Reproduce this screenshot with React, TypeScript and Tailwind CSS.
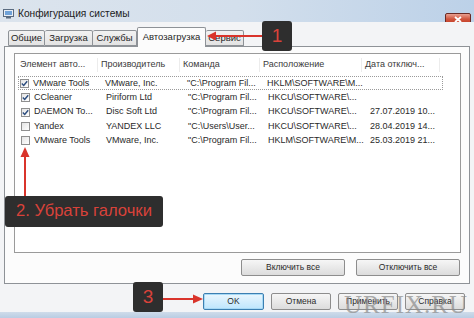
const font = { fontFamily: '"Liberation Sans", Arial, sans-serif' };

const rows = [
  { on: true, name: "VMware Tools", maker: "VMware, Inc.", cmd: "\"C:\\Program Fil...", loc: "HKLM\\SOFTWARE\\M...", date: "" },
  { on: true, name: "CCleaner", maker: "Piriform Ltd", cmd: "\"C:\\Program Fil...", loc: "HKCU\\SOFTWARE\\...", date: "" },
  { on: true, name: "DAEMON To...", maker: "Disc Soft Ltd", cmd: "\"C:\\Program Fil...", loc: "HKCU\\SOFTWARE\\...", date: "27.07.2019 10..." },
  { on: false, name: "Yandex", maker: "YANDEX LLC", cmd: "\"C:\\Users\\User...", loc: "HKCU\\SOFTWARE\\...", date: "28.04.2019 14..." },
  { on: false, name: "VMware Tools", maker: "VMware, Inc.", cmd: "\"C:\\Program Fil...", loc: "HKLM\\SOFTWARE\\M...", date: "25.03.2019 21..." },
];

const tabs = [
  { t: "Общие", w: "w-[37px]" },
  { t: "Загрузка", w: "w-[48px]" },
  { t: "Службы", w: "w-[44px]" },
  { t: "Автозагрузка", w: "w-[69px]" },
  { t: "Сервис", w: "w-[38px]" },
];

const Check = ({ on }: { on: boolean }) => (
  <span className="w-[9px] h-[9px] border border-[#8f8f8f] bg-gradient-to-br from-[#e4e4e4] to-[#ffffff] flex items-center justify-center shrink-0">
    {on && (
      <svg width="7" height="7" viewBox="0 0 7 7">
        <path d="M0.8 3.6 L2.7 5.5 L6.2 1.2" stroke="#2b4c7e" strokeWidth="1.4" fill="none" />
      </svg>
    )}
  </span>
);

const Btn = ({ label, w, focus }: { label: string; w: string; focus?: boolean }) => (
  <div
    className={`${w} h-[17px] rounded-[2px] border flex items-center justify-center text-[8.5px] text-[#2a2a2a] ${
      focus
        ? "border-[#3c7fb1] bg-gradient-to-b from-[#eaf6fd] to-[#bee6fd] shadow-[inset_0_0_0_1px_#a7d9f5]"
        : "border-[#8d8d8d] bg-gradient-to-b from-[#f6f6f6] to-[#dcdcdc]"
    }`}
  >
    {label}
  </div>
);

const App = () => {
  return (
    <div className="relative w-[474px] h-[318px] overflow-hidden flex flex-col bg-[#f2f3f5]" style={font}>
      {/* Title bar */}
      <div className="h-[22px] shrink-0 flex items-start bg-gradient-to-r from-[#dce4ed] via-[#d3dfec] to-[#bcd1e8]">
        <div className="flex items-center gap-[4px] pl-[3px] pt-[6px]">
          <svg width="11" height="10" viewBox="0 0 11 10">
            <rect x="0.5" y="0.5" width="10" height="7" fill="#e9eef5" stroke="#5a6b80" />
            <rect x="2" y="2" width="7" height="4" fill="#6fa2d8" />
            <rect x="3" y="8" width="5" height="1.5" fill="#5a6b80" />
          </svg>
          <span className="text-[10.2px] text-[#1b1b1b]">Конфигурация системы</span>
        </div>
        <div className="ml-auto mr-[3px] mt-[13px] w-[26px] h-[12px] rounded-[2px] border border-[#6b2a24] bg-gradient-to-b from-[#e8a091] via-[#d0553e] to-[#c23a22] flex items-center justify-center">
          <svg width="8" height="7" viewBox="0 0 8 7">
            <path d="M1 1 L7 6 M7 1 L1 6" stroke="#ffffff" strokeWidth="1.8" />
          </svg>
        </div>
      </div>

      {/* Body */}
      <div className="flex-1 flex flex-col bg-[#f3f4f6] px-[4px]">
        {/* Tabs */}
        <div className="flex items-end pl-[4px] pt-[5px] h-[24px] text-[9.5px] text-[#1e1e1e]">
          {tabs.map(({ t, w }) =>
            t === "Автозагрузка" ? (
              <div
                key={t}
                className={`${w} h-[20px] -mb-[1px] z-10 flex items-center justify-center border border-b-0 border-[#8e9297] bg-[#fcfcfc] rounded-t-[2px] whitespace-nowrap`}
              >
                {t}
              </div>
            ) : (
              <div
                key={t}
                className={`${w} h-[16px] flex items-center justify-center border border-[#8e9297] border-l-0 first:border-l bg-gradient-to-b from-[#f2f2f2] to-[#e3e3e3] rounded-t-[2px] whitespace-nowrap overflow-hidden`}
              >
                {t}
              </div>
            )
          )}
        </div>

        {/* Tab panel */}
        <div className="h-[238px] border border-[#8e9297] bg-[#fcfcfc] pl-[9px] pr-[8px] pt-[6px] flex flex-col">
          <div className="h-[200px] border border-[#9a9a9a] bg-white text-[9px] text-[#2a2a2a] flex flex-col">
            <div className="grid grid-cols-[83px_82px_80px_102px_78px] h-[22px] items-center text-[#3a3a3a]">
              <span className="pl-[5px] border-r border-[#ececec]">Элемент авто...</span>
              <span className="pl-[3px] border-r border-[#ececec]">Производитель</span>
              <span className="pl-[3px] border-r border-[#ececec]">Команда</span>
              <span className="pl-[3px] border-r border-[#ececec]">Расположение</span>
              <span className="pl-[3px] border-r border-[#ececec]">Дата отключ...</span>
            </div>
            {rows.map((r, i) => (
              <div
                key={i}
                className={`grid grid-cols-[83px_82px_80px_102px_1fr] h-[14.2px] items-center ${
                  i === 0 ? "border border-dotted border-[#9a9a9a] mr-[17px] ml-[3px]" : "ml-[4px] border border-transparent"
                }`}
              >
                <span className="flex items-center gap-[4px] pl-[1px] whitespace-nowrap">
                  <Check on={r.on} />
                  {r.name}
                </span>
                <span className="pl-[3px] whitespace-nowrap">{r.maker}</span>
                <span className="pl-[3px] whitespace-nowrap">{r.cmd}</span>
                <span className="pl-[3px] whitespace-nowrap">{r.loc}</span>
                <span className="pl-[3px] whitespace-nowrap">{r.date}</span>
              </div>
            ))}
          </div>
          <div className="flex justify-end gap-[11px] mt-[6px] pr-[1px]">
            <Btn label="Включить все" w="w-[104px]" />
            <Btn label="Отключить все" w="w-[104px]" />
          </div>
        </div>

        {/* Dialog buttons */}
        <div className="flex justify-end gap-[7px] pt-[9px] pr-[5px]">
          <Btn label="OK" w="w-[61px]" focus />
          <Btn label="Отмена" w="w-[60px]" />
          <Btn label="Применить" w="w-[60px]" />
          <Btn label="Справка" w="w-[60px]" />
        </div>
      </div>
      <div className="h-[6px] shrink-0 bg-gradient-to-b from-[#cfdcea] to-[#b9cde3]" />

      {/* Watermark */}
      <span
        className="absolute left-[344px] top-[286px] text-[25px] tracking-[1px] text-[#8a8a8a]/70"
        style={{ fontFamily: '"Liberation Serif", "Times New Roman", serif' }}
      >
        URFIX.RU
      </span>

      {/* Annotation 1 */}
      <svg className="absolute left-[205px] top-[30px]" width="60" height="12" viewBox="0 0 60 12">
        <path d="M58 6 L8 6" stroke="#d9342b" strokeWidth="2" />
        <path d="M2 6 L11 1.5 L11 10.5 Z" fill="#d9342b" />
      </svg>
      <div className="absolute left-[262px] top-[21px] w-[30px] h-[30px] rounded-[3px] bg-[#2e2e2e] flex items-center justify-center text-[19px] text-[#d9423a]">
        1
      </div>

      {/* Annotation 2 */}
      <svg className="absolute left-[19px] top-[146px]" width="12" height="52" viewBox="0 0 12 52">
        <path d="M6 50 L6 8" stroke="#d9342b" strokeWidth="2" />
        <path d="M6 1 L1.5 11 L10.5 11 Z" fill="#d9342b" />
      </svg>
      <div className="absolute left-[5px] top-[196px] w-[158px] h-[31px] rounded-[3px] bg-[#2e2e2e] flex items-center pl-[11px] text-[16.6px] text-[#d9423a]">
        2. Убрать галочки
      </div>

      {/* Annotation 3 */}
      <svg className="absolute left-[162px] top-[293px]" width="42" height="12" viewBox="0 0 42 12">
        <path d="M0 6 L34 6" stroke="#d9342b" strokeWidth="2" />
        <path d="M41 6 L31 1.5 L31 10.5 Z" fill="#d9342b" />
      </svg>
      <div className="absolute left-[133px] top-[282px] w-[30px] h-[30px] rounded-[3px] bg-[#2e2e2e] flex items-center justify-center text-[19px] text-[#d9423a]">
        3
      </div>
    </div>
  );
};

export default App;
